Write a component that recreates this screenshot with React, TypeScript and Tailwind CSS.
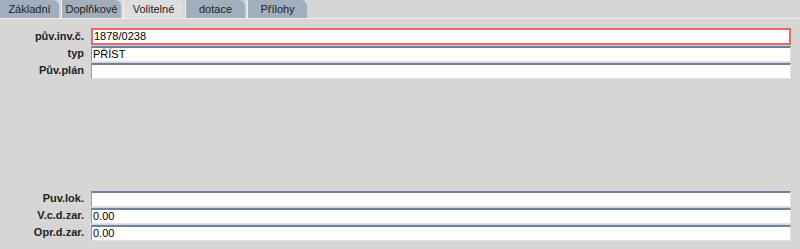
import React from "react";

type Field = {
  label: string;
  value: string;
  invalid?: boolean;
};

const tabs = ["Základní", "Doplňkové", "Volitelné", "dotace", "Přílohy"];
const activeTab = 2;

const topFields: Field[] = [
  { label: "pův.inv.č.", value: "1878/0238", invalid: true },
  { label: "typ", value: "PŘÍST" },
  { label: "Pův.plán", value: "" },
];

const bottomFields: Field[] = [
  { label: "Puv.lok.", value: "" },
  { label: "V.c.d.zar.", value: "0.00" },
  { label: "Opr.d.zar.", value: "0.00" },
];

const Row = ({ field }: { field: Field }) => (
  <div className="flex h-[17px] items-center">
    <label className="w-[85px] shrink-0 pr-[1px] text-right text-[11px] font-bold text-[#222]">
      {field.label}
    </label>
    <div
      className={
        field.invalid
          ? "ml-[6px] flex h-[17px] w-[700px] items-center border-2 border-[#e46a6a] bg-white pl-[1px] text-[11px] text-black"
          : "ml-[6px] flex h-[16px] w-[700px] items-center border-t-2 border-r border-b border-l border-t-[#6f81a0] border-r-[#e2e2e2] border-b-[#e2e2e2] border-l-[#8a98b2] bg-white pl-[1px] text-[11px] text-black"
      }
    >
      {field.value}
    </div>
  </div>
);

export default function App() {
  return (
    <div
      className="h-[249px] w-[800px] overflow-hidden bg-[#d6d6d6]"
      style={{ fontFamily: '"Liberation Sans", Arial, sans-serif' }}
    >
      <div className="flex h-[18px] gap-[2px]">
        {tabs.map((tab, i) => (
          <div
            key={tab}
            className={
              i === activeTab
                ? "flex h-[18px] w-[60px] items-center justify-center rounded-tr-[6px] border-l border-[#f4f4f4] bg-[#dedede] text-[11px] text-[#222]"
                : i === 0
                ? "flex h-[18px] w-[59px] items-center justify-center rounded-tr-[6px] bg-[#a1aebe] text-[11px] text-[#222]"
                : "flex h-[18px] w-[60px] items-center justify-center rounded-tr-[6px] border-l border-[#eef0f3] bg-[#a1aebe] text-[11px] text-[#222]"
            }
          >
            {tab}
          </div>
        ))}
      </div>
      <div className="h-[1px] bg-[#ececec]" />
      <div className="flex flex-col pt-[9px]">
        {topFields.map((f) => (
          <Row key={f.label} field={f} />
        ))}
        <div className="h-[111px]" />
        {bottomFields.map((f) => (
          <Row key={f.label} field={f} />
        ))}
      </div>
    </div>
  );
}
